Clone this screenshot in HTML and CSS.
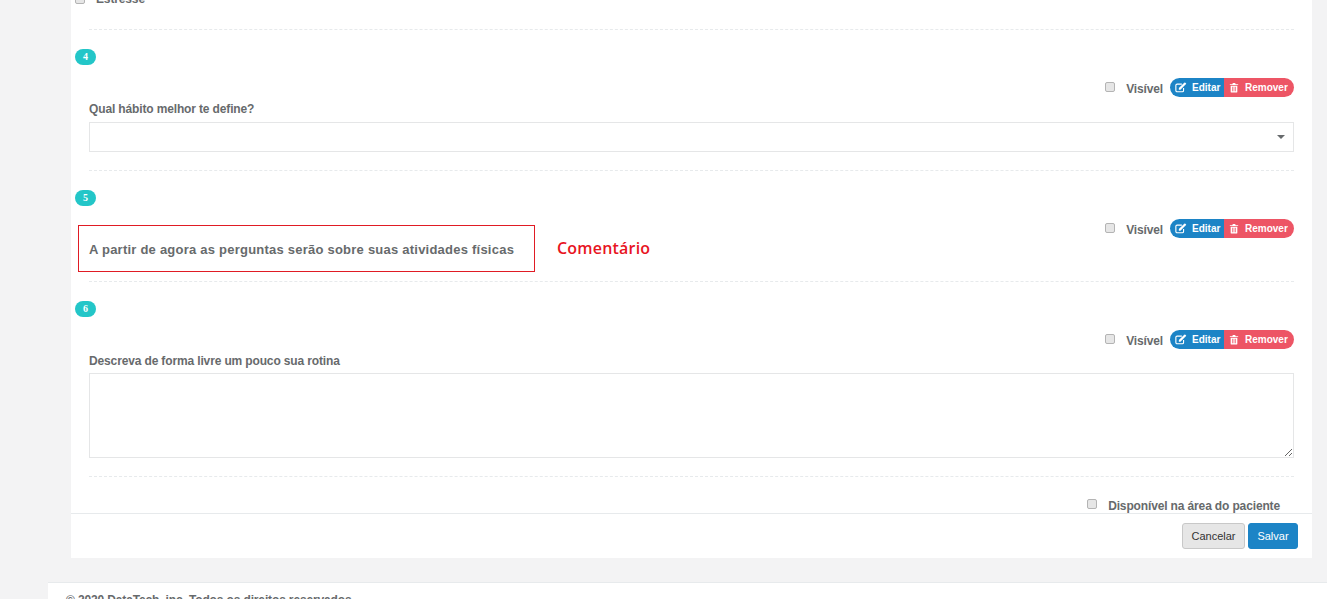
FILE: index.html
```html
<!DOCTYPE html>
<html lang="pt-BR">
<head>
<meta charset="utf-8">
<title>Formulário</title>
<link rel="stylesheet" href="styles.css">
</head>
<body>
<main class="panel">
  <div class="panel-body">
    <section class="section section-first">
      <label class="option"><input type="checkbox" class="check"><span>Estresse</span></label>
    </section>

    <section class="section">
      <span class="badge">4</span>
      <div class="controls">
        <input type="checkbox" class="check"><span class="visible">Visível</span>
        <div class="btn-group">
          <a class="pill pill-blue"><svg class="icon" viewBox="0 0 14 12"><path d="M10 6.500v3A1.500 1.500 0 0 1 8.500 11h-6A1.500 1.500 0 0 1 1 9.500v-6A1.500 1.500 0 0 1 2.500 2H8" fill="none" stroke="currentColor" stroke-width="1.300"/><path d="M4.500 8.500V6.700L10.500 .8l1.800 1.800-6 5.900zM11.200.2l.5-.1 1.300 1.300v.5l-.9.900-1.800-1.800z" fill="currentColor"/></svg>Editar</a>
          <a class="pill pill-red"><svg class="icon icon-trash" viewBox="0 0 12 12"><path d="M4 2 4.600.6h2.800L8 2h3v1H1V2zM2 3.800h8V11a1 1 0 0 1-1 1H3a1 1 0 0 1-1-1zM3.800 5v5.500h.8V5zm1.800 0v5.500h.8V5zm1.800 0v5.500h.8V5z" fill="currentColor" fill-rule="evenodd"/></svg>Remover</a>
        </div>
      </div>
      <label class="question">Qual hábito melhor te define?</label>
      <div class="select"><span class="caret"></span></div>
    </section>

    <section class="section">
      <span class="badge">5</span>
      <div class="controls">
        <input type="checkbox" class="check"><span class="visible">Visível</span>
        <div class="btn-group">
          <a class="pill pill-blue"><svg class="icon" viewBox="0 0 14 12"><path d="M10 6.500v3A1.500 1.500 0 0 1 8.500 11h-6A1.500 1.500 0 0 1 1 9.500v-6A1.500 1.500 0 0 1 2.500 2H8" fill="none" stroke="currentColor" stroke-width="1.300"/><path d="M4.500 8.500V6.700L10.500 .8l1.800 1.800-6 5.900zM11.200.2l.5-.1 1.300 1.300v.5l-.9.900-1.800-1.800z" fill="currentColor"/></svg>Editar</a>
          <a class="pill pill-red"><svg class="icon icon-trash" viewBox="0 0 12 12"><path d="M4 2 4.600.6h2.800L8 2h3v1H1V2zM2 3.800h8V11a1 1 0 0 1-1 1H3a1 1 0 0 1-1-1zM3.800 5v5.500h.8V5zm1.800 0v5.500h.8V5zm1.800 0v5.500h.8V5z" fill="currentColor" fill-rule="evenodd"/></svg>Remover</a>
        </div>
      </div>
      <div class="comment">
        <h3 class="comment-text">A partir de agora as perguntas serão sobre suas atividades físicas</h3>
        <div class="annotation-box"></div>
        <span class="annotation-label">Comentário</span>
      </div>
    </section>

    <section class="section">
      <span class="badge">6</span>
      <div class="controls">
        <input type="checkbox" class="check"><span class="visible">Visível</span>
        <div class="btn-group">
          <a class="pill pill-blue"><svg class="icon" viewBox="0 0 14 12"><path d="M10 6.500v3A1.500 1.500 0 0 1 8.500 11h-6A1.500 1.500 0 0 1 1 9.500v-6A1.500 1.500 0 0 1 2.500 2H8" fill="none" stroke="currentColor" stroke-width="1.300"/><path d="M4.500 8.500V6.700L10.500 .8l1.800 1.800-6 5.900zM11.200.2l.5-.1 1.300 1.300v.5l-.9.900-1.800-1.800z" fill="currentColor"/></svg>Editar</a>
          <a class="pill pill-red"><svg class="icon icon-trash" viewBox="0 0 12 12"><path d="M4 2 4.600.6h2.800L8 2h3v1H1V2zM2 3.800h8V11a1 1 0 0 1-1 1H3a1 1 0 0 1-1-1zM3.800 5v5.500h.8V5zm1.800 0v5.500h.8V5zm1.800 0v5.500h.8V5z" fill="currentColor" fill-rule="evenodd"/></svg>Remover</a>
        </div>
      </div>
      <label class="question question-tight">Descreva de forma livre um pouco sua rotina</label>
      <textarea class="textarea"></textarea>
    </section>

    <label class="available"><input type="checkbox" class="check"><span>Disponível na área do paciente</span></label>
  </div>
  <div class="panel-footer">
    <button class="btn btn-default">Cancelar</button>
    <button class="btn btn-primary">Salvar</button>
  </div>
</main>
<footer class="page-footer">© 2020 DataTech, inc. Todos os direitos reservados</footer>
</body>
</html>
```
FILE: styles.css
```css
* { box-sizing: border-box; }
html, body { height: 100%; }
body {
  margin: 0;
  overflow: hidden;
  background: #f3f3f4;
  font-family: "Liberation Sans", Arial, sans-serif;
  font-size: 12px;
  letter-spacing: -0.14px;
  color: #676a6c;
}
.panel {
  margin-left: 71px;
  width: 1241px;
  height: 558px;
  background: #fff;
  display: flex;
  flex-direction: column;
}
.panel-body {
  height: 513px;
  overflow: hidden;
  padding: 0 18px;
  flex: none;
}
.section {
  border-bottom: 1px dashed #e7eaec;
  padding-bottom: 18px;
  margin-bottom: 19px;
}
.section-first {
  margin-top: -10px;
  height: 40px;
  padding-bottom: 0;
}
.option {
  display: flex;
  align-items: center;
  font-weight: bold;
  margin-left: -14px;
  height: 17px;
}
.option .check { margin-right: 11px; }
.check {
  appearance: none;
  width: 10px;
  height: 10px;
  margin: 0;
  background: #e6e6e6;
  border: 1px solid #b4b4b4;
  border-radius: 2px;
  flex: none;
}
.badge {
  display: block;
  width: 21px;
  height: 16px;
  margin-left: -14px;
  border-radius: 8px;
  background: #23c6c8;
  color: #fff;
  font-family: "Liberation Serif", serif;
  font-weight: bold;
  font-size: 10px;
  letter-spacing: 0;
  line-height: 15px;
  text-align: center;
}
.controls {
  display: flex;
  justify-content: flex-end;
  align-items: center;
  margin-top: 13px;
  height: 19px;
}
.controls .check { margin: -2px 11px 0 0; }
.visible {
  font-weight: bold;
  margin-right: 7px;
  padding-top: 2px;
}
.btn-group { display: flex; }
.pill {
  display: flex;
  align-items: center;
  height: 19px;
  color: #fff;
  font-size: 10px;
  letter-spacing: 0;
  font-weight: bold;
  white-space: nowrap;
}
.pill-blue {
  width: 54px;
  padding-left: 5px;
  background: #1c84c6;
  border-radius: 10px 0 0 10px;
}
.pill-red {
  width: 70px;
  padding-left: 5px;
  background: #ed5565;
  border-radius: 0 10px 10px 0;
}
.icon { width: 12px; height: 11px; margin-right: 5px; flex: none; }
.icon-trash { width: 10px; margin-right: 6px; }
.question {
  display: block;
  font-weight: bold;
  line-height: 14px;
  margin: 5px 0 6px;
}
.question-tight { margin-bottom: 5px; }
.select {
  position: relative;
  height: 30px;
  border: 1px solid #e5e6e7;
  background: #fff;
}
.caret {
  position: absolute;
  right: 8px;
  top: 12px;
  border-style: solid;
  border-width: 4px 4px 0;
  border-color: #676a6c transparent transparent;
}
.textarea {
  display: block;
  width: 100%;
  height: 85px;
  border: 1px solid #e5e6e7;
  background: #fff;
  margin: 0;
}
.comment {
  position: relative;
  height: 25px;
  padding-bottom: 1px;
  display: flex;
  align-items: center;
}
.comment-text {
  margin: 0;
  font-size: 13px;
  letter-spacing: 0.23px;
  font-weight: bold;
  line-height: 16px;
  white-space: nowrap;
}
.annotation-box {
  position: absolute;
  left: -11px;
  top: -13px;
  width: 457px;
  height: 47px;
  border: 1px solid #e01b24;
}
.annotation-label {
  position: absolute;
  left: 468px;
  top: -1px;
  font-family: "Open Sans", sans-serif;
  font-size: 16px;
  letter-spacing: 0.2px;
  font-weight: 600;
  color: #e8141f;
}
.available {
  display: flex;
  justify-content: flex-end;
  align-items: center;
  padding-right: 14px;
  font-weight: bold;
  margin-top: 20px;
  height: 17px;
}
.available .check { margin-right: 11px; margin-top: -4px; }
.panel-footer {
  height: 45px;
  border-top: 1px solid #e7eaec;
  padding: 9px 14px 0 0;
  display: flex;
  justify-content: flex-end;
  gap: 3px;
}
.btn {
  height: 26px;
  font: 11px "Liberation Sans", Arial, sans-serif;
  border-radius: 3px;
  padding: 0;
}
.btn-default {
  width: 63px;
  background: #e6e6e6;
  border: 1px solid #c8c8c8;
  color: #333;
}
.btn-primary {
  width: 50px;
  background: #1c84c6;
  border: 1px solid #1c84c6;
  color: #fff;
}
.page-footer {
  margin-top: 24px;
  margin-left: 48px;
  height: 40px;
  background: #fff;
  border-top: 1px solid #e7eaec;
  padding: 10px 0 0 18px;
  font-weight: bold;
  line-height: 14px;
}
```
